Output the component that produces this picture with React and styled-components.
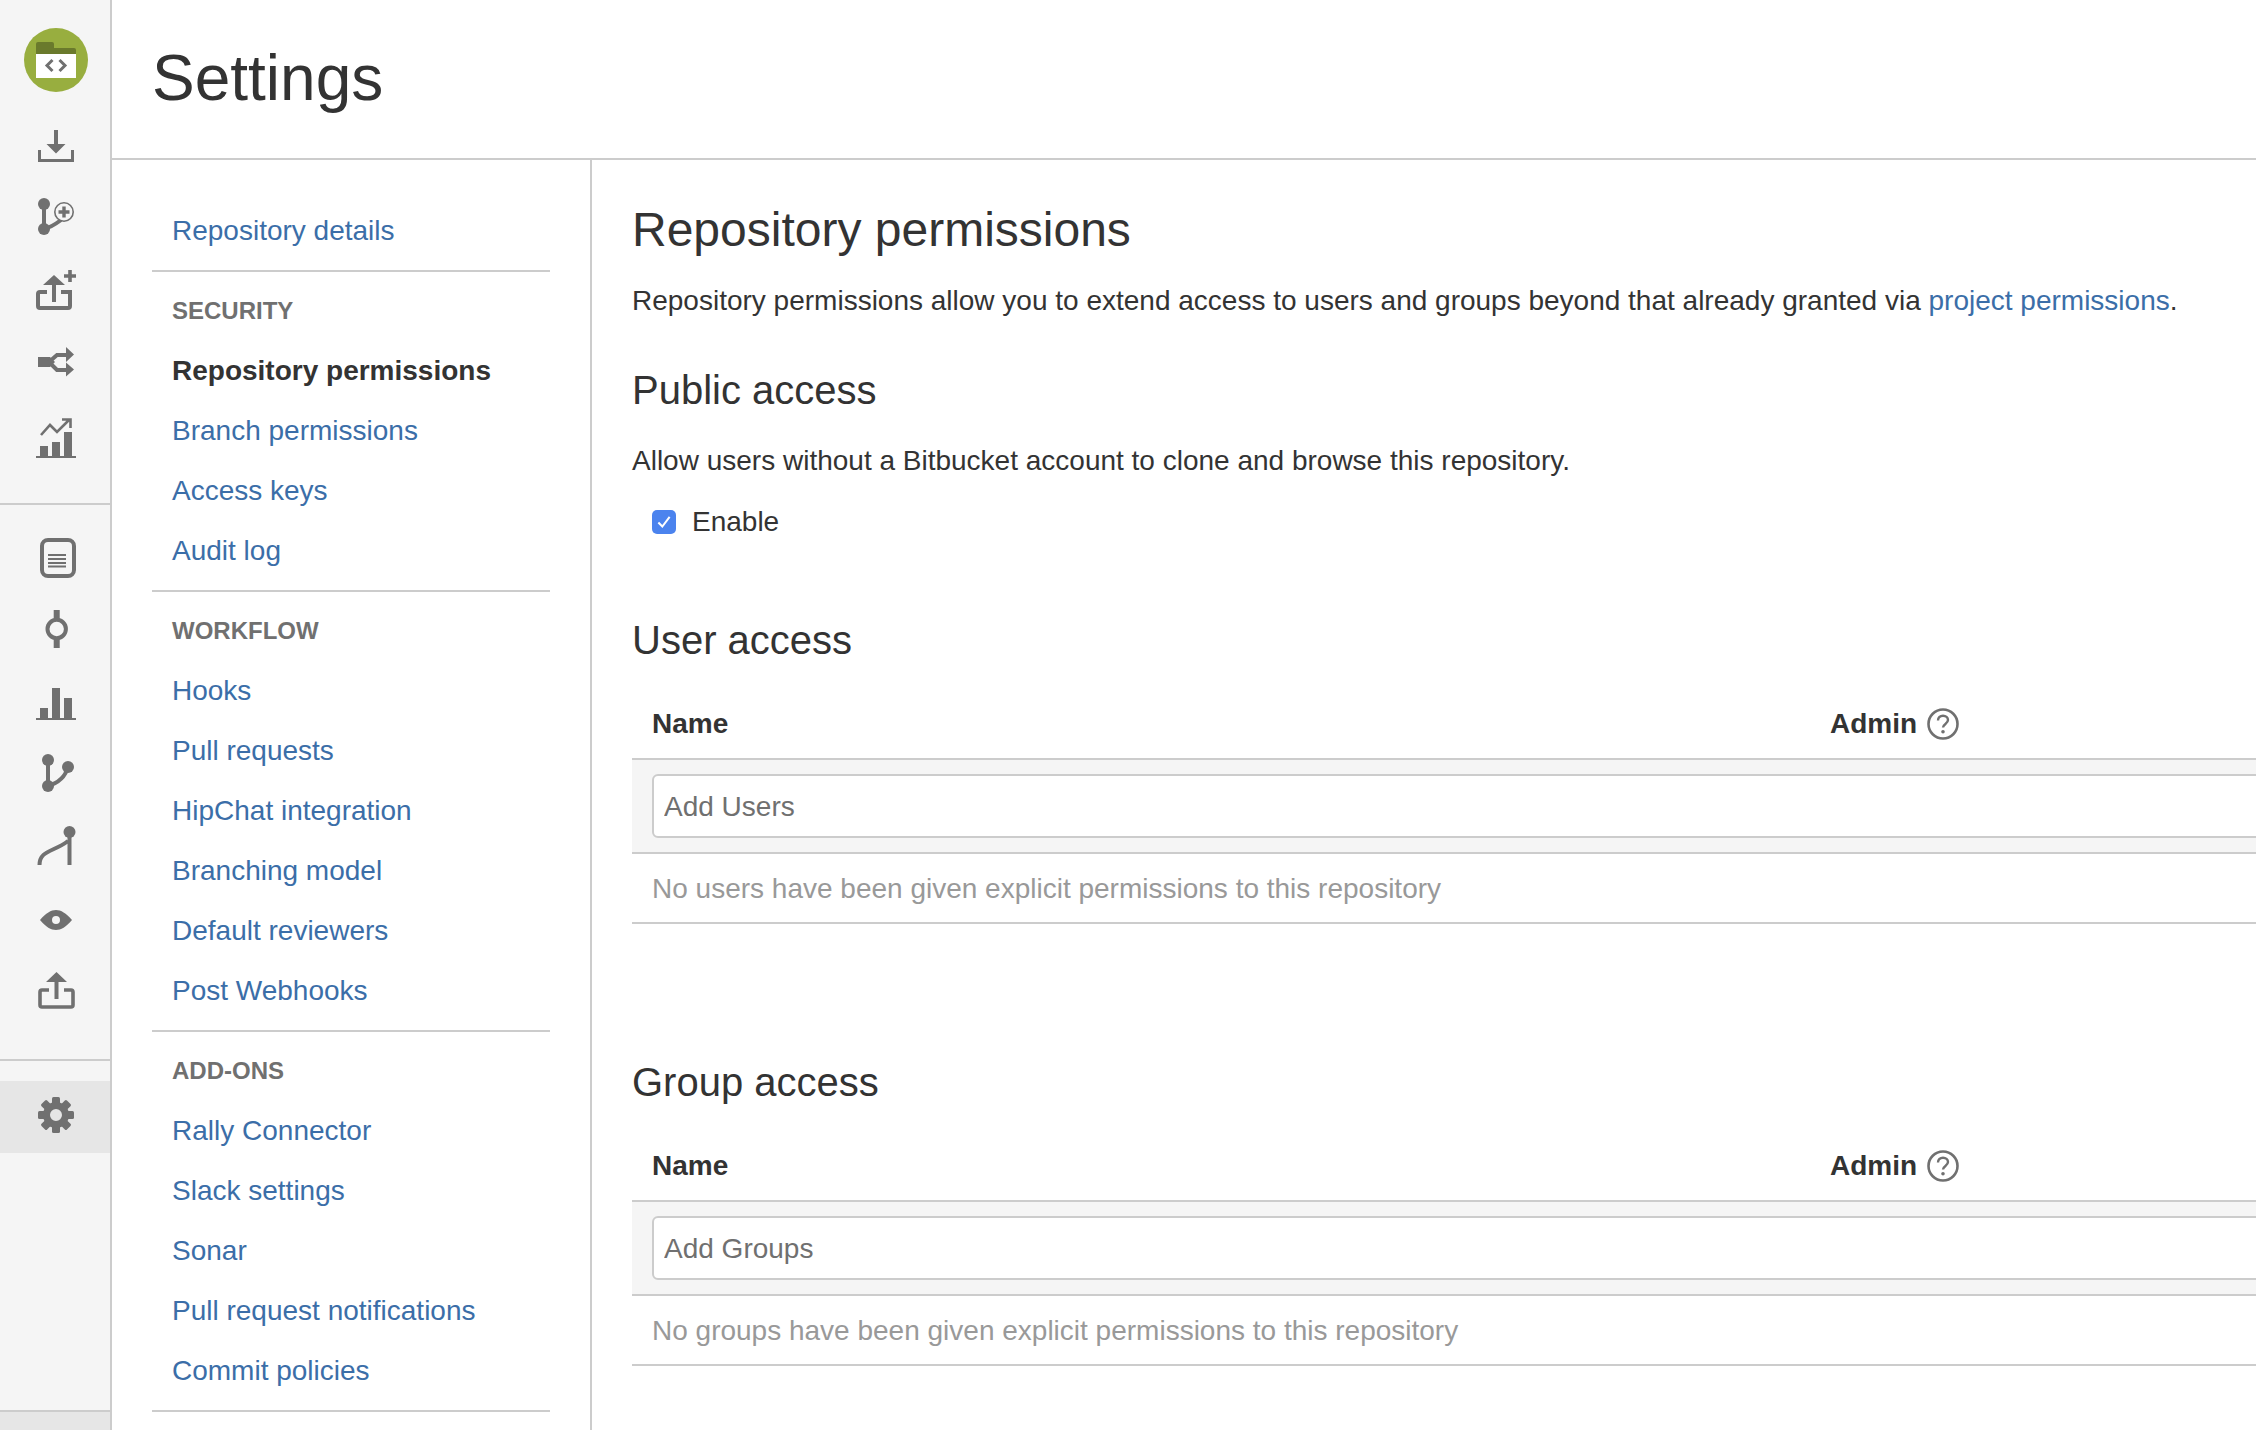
import styled, { createGlobalStyle } from "styled-components";

const GlobalStyle = createGlobalStyle`
  html, body {
    margin: 0;
    padding: 0;
    background: #fff;
    overflow: hidden;
  }
  * {
    box-sizing: border-box;
  }
`;

const Page = styled.div`
  display: flex;
  width: 2256px;
  height: 1430px;
  overflow: hidden;
  font-family: "Liberation Sans", Arial, sans-serif;
  font-size: 28px;
  color: #333;
`;

const Sidebar = styled.aside`
  display: flex;
  flex-direction: column;
  flex: 0 0 112px;
  background: #f5f5f5;
  border-right: 2px solid #ccc;
`;

const IconGroup = styled.div`
  display: flex;
  flex-direction: column;
  height: ${(p) => p.$height}px;
  padding-left: 36px;
  border-bottom: 2px solid #ccc;
`;

const LogoWrap = styled.div`
  margin: 28px 0 0 -12px;
  height: 64px;
`;

const IconSlot = styled.div`
  width: 40px;
  height: 40px;
  margin-top: ${(p) => p.$gap}px;
  color: #707070;

  svg {
    display: block;
  }
`;

const SettingsSlot = styled.div`
  display: flex;
  align-items: center;
  height: 72px;
  margin-top: 20px;
  padding: 0 0 4px 38px;
  background: #e6e6e6;
  color: #707070;
`;

const SidebarFill = styled.div`
  flex: 1;
  border-bottom: 2px solid #ccc;
`;

const SidebarFoot = styled.div`
  height: 18px;
  background: #e6e6e6;
`;

const Column = styled.div`
  display: flex;
  flex-direction: column;
  flex: 1;
  min-width: 0;
`;

const Header = styled.header`
  height: 160px;
  padding: 40px 0 0 40px;
  border-bottom: 2px solid #ccc;
`;

const PageTitle = styled.h1`
  margin: 0;
  font-size: 64px;
  font-weight: 400;
  line-height: 76px;
`;

const Body = styled.div`
  display: flex;
  flex: 1;
  min-height: 0;
`;

const Nav = styled.nav`
  flex: 0 0 480px;
  padding: 41px 40px 0;
  border-right: 2px solid #ccc;
`;

const NavGroup = styled.div`
  padding: ${(p) => (p.$first ? "0 0 9px" : "19px 0 9px")};
  border-bottom: 2px solid #ccc;
`;

const NavHeading = styled.div`
  margin-bottom: 10px;
  padding-left: 20px;
  font-size: 24px;
  font-weight: 700;
  line-height: 40px;
  color: #707070;
  text-transform: uppercase;
`;

const NavLink = styled.a`
  display: block;
  padding-left: 20px;
  line-height: 60px;
  color: ${(p) => (p.$active ? "#333" : "#3b6ea8")};
  font-weight: ${(p) => (p.$active ? 700 : 400)};
  text-decoration: none;
`;

const Main = styled.main`
  flex: 1;
  min-width: 0;
  padding: 41px 0 0 40px;
  overflow: hidden;
`;

const Title = styled.h2`
  margin: 0;
  font-size: 48px;
  font-weight: 400;
  line-height: 58px;
`;

const Text = styled.p`
  margin: ${(p) => p.$top}px 0 0;
  line-height: 40px;
  white-space: nowrap;
`;

const Link = styled.a`
  color: #3b6ea8;
  text-decoration: none;
`;

const Subtitle = styled.h3`
  margin: ${(p) => p.$top}px 0 0;
  font-size: 40px;
  font-weight: 400;
  line-height: 48px;
`;

const CheckRow = styled.label`
  display: flex;
  align-items: center;
  gap: 16px;
  margin-top: 21px;
  padding-left: 20px;
  line-height: 40px;
`;

const CheckBox = styled.span`
  display: flex;
  align-items: center;
  justify-content: center;
  width: 24px;
  height: 24px;
  border-radius: 5px;
  background: #4b83ee;
`;

const Table = styled.div`
  width: 1700px;
  margin-top: 26px;
`;

const TableHead = styled.div`
  display: grid;
  grid-template-columns: 1178px 1fr;
  align-items: center;
  height: 70px;
  padding-left: 20px;
  border-bottom: 2px solid #ccc;
  font-weight: 700;
`;

const AdminCell = styled.div`
  display: flex;
  align-items: center;
  gap: 10px;
`;

const InputRow = styled.div`
  padding: 14px 0 14px 20px;
  background: #f5f5f5;
  border-bottom: 2px solid #ccc;
`;

const TextInput = styled.input`
  display: block;
  width: 100%;
  height: 64px;
  padding: 2px 10px 0;
  border: 2px solid #ccc;
  border-radius: 6px;
  background: #fff;
  font: inherit;
  color: #333;

  &::placeholder {
    color: #707070;
    opacity: 1;
  }
`;

const EmptyRow = styled.div`
  display: flex;
  align-items: center;
  height: 70px;
  padding: 2px 0 0 20px;
  border-bottom: 2px solid #ccc;
  color: #999;
`;

function Logo() {
  return (
    <svg width="64" height="64" viewBox="0 0 64 64">
      <circle cx="32" cy="32" r="32" fill="#98ae3f" />
      <path d="M12 20v-4a2 2 0 0 1 2-2h14a2 2 0 0 1 2 2v4h20a2 2 0 0 1 2 2v4H12z" fill="#6a7a2c" />
      <rect x="12" y="26" width="40" height="24" fill="#fff" />
      <path d="M28.500 32l-5.500 5.500 5.500 5.500M35.500 32l5.500 5.500-5.500 5.500" fill="none" stroke="#707070" strokeWidth="3" />
    </svg>
  );
}

function Icon({ children }) {
  return (
    <svg width="40" height="40" viewBox="0 0 40 40" fill="currentColor" style={{ overflow: "visible" }}>
      {children}
    </svg>
  );
}

const DownloadIcon = () => (
  <Icon>
    <path d="M18 4h4v14h7.500L20 27.500 10.500 18H18z" />
    <path d="M2 24h3v9h30v-9h3v12H2z" />
  </Icon>
);

const CreatePrIcon = () => (
  <Icon>
    <circle cx="8" cy="8" r="6" />
    <circle cx="8" cy="33" r="6" />
    <path d="M8 8v25M8 33c8-2 13-6 17-9" fill="none" stroke="currentColor" strokeWidth="4" />
    <circle cx="28" cy="16" r="9.200" fill="#f5f5f5" stroke="currentColor" strokeWidth="1.600" />
    <path d="M28 10.500v11M22.500 16h11" fill="none" stroke="currentColor" strokeWidth="3.400" />
  </Icon>
);

const ForkIcon = () => (
  <Icon>
    <path d="M11 22H4a2 2 0 0 0-2 2v12a2 2 0 0 0 2 2h28a2 2 0 0 0 2-2V22h-9" fill="none" stroke="currentColor" strokeWidth="4" />
    <path d="M18 5l11 10h-9v17h-4V15H7z" />
    <path d="M34 0v12M28 6h12" fill="none" stroke="currentColor" strokeWidth="3.600" />
  </Icon>
);

const CompareIcon = () => (
  <Icon>
    <path d="M2 15h12l5 5-5 5H2z" />
    <path d="M13 20l8-7h10M13 20l8 8h10" fill="none" stroke="currentColor" strokeWidth="4" />
    <path d="M30 5l8 7.500-8 7.500zM30 20.500l8 7-8 7z" />
  </Icon>
);

const ChartIcon = () => (
  <Icon>
    <path d="M0 38h40v2H0zM4 28h8v10H4zM16 24h8v14h-8zM28 14h8v24h-8z" />
    <path d="M5 17l9-10 7 7 12-12M26 1.500h8.500v8.500" fill="none" stroke="currentColor" strokeWidth="2.600" />
  </Icon>
);

const SourceIcon = () => (
  <Icon>
    <rect x="6" y="2" width="32" height="36" rx="6" fill="none" stroke="currentColor" strokeWidth="4" />
    <path d="M12 17h18M12 21h18M12 25h18M12 28.500h18" fill="none" stroke="currentColor" strokeWidth="1.800" />
  </Icon>
);

const CommitIcon = () => (
  <Icon>
    <circle cx="20.700" cy="20" r="9.200" fill="none" stroke="currentColor" strokeWidth="4" />
    <path d="M20.700 1v10M20.700 29v10" fill="none" stroke="currentColor" strokeWidth="6" />
  </Icon>
);

const BarsIcon = () => (
  <Icon>
    <path d="M0 34h40v2H0zM4 24h8v10H4zM16 4h8v30h-8zM28 14h8v20h-8z" />
  </Icon>
);

const BranchIcon = () => (
  <Icon>
    <circle cx="12" cy="7" r="6" />
    <circle cx="12" cy="33" r="6" />
    <circle cx="32" cy="14" r="6" />
    <path d="M12 7v26M12 33c10-3 17-8 20-19" fill="none" stroke="currentColor" strokeWidth="4" />
  </Icon>
);

const PullRequestIcon = () => (
  <Icon>
    <circle cx="33.500" cy="6" r="6" />
    <path d="M33.500 6v33M3.500 39C3.500 24 18 26 32 15" fill="none" stroke="currentColor" strokeWidth="4" />
  </Icon>
);

const EyeIcon = () => (
  <Icon>
    <path
      fillRule="evenodd"
      d="M4 20c6-7 11-10 16-10s10 3 16 10c-6 7-11 10-16 10S10 27 4 20zm16-4a4 4 0 1 0 0 8 4 4 0 0 0 0-8z"
    />
  </Icon>
);

const ShareIcon = () => (
  <Icon>
    <path d="M13 20H6a2 2 0 0 0-2 2v13a2 2 0 0 0 2 2h29a2 2 0 0 0 2-2V22a2 2 0 0 0-2-2h-7" fill="none" stroke="currentColor" strokeWidth="3.600" />
    <path d="M20.500 2l10.500 10h-8.500v17h-4V12H10z" />
  </Icon>
);

const GearIcon = () => (
  <svg width="36" height="36" viewBox="0 0 36 36" fill="currentColor">
    {[0, 45, 90, 135, 180, 225, 270, 315].map((angle) => (
      <rect key={angle} x="14" y="0" width="8" height="10" rx="1.500" transform={`rotate(${angle} 18 18)`} />
    ))}
    <path
      fillRule="evenodd"
      d="M18 5a13 13 0 1 1 0 26 13 13 0 0 1 0-26zm0 7a6 6 0 1 0 0 12 6 6 0 0 0 0-12z"
    />
  </svg>
);

const HelpIcon = () => (
  <svg width="32" height="32" viewBox="0 0 32 32">
    <circle cx="16" cy="16" r="14.500" fill="none" stroke="#707070" strokeWidth="2.600" />
    <path d="M11 12.500c0-3 2.200-4.800 5-4.800s5 1.800 5 4.400c0 3.800-5 3.800-5 7.400" fill="none" stroke="#707070" strokeWidth="2.400" />
    <circle cx="16" cy="23.800" r="1.800" fill="#707070" />
  </svg>
);

const topIcons = [
  [DownloadIcon, 34],
  [CreatePrIcon, 30],
  [ForkIcon, 34],
  [CompareIcon, 32],
  [ChartIcon, 36],
];

const midIcons = [
  [SourceIcon, 33],
  [CommitIcon, 31],
  [BarsIcon, 35],
  [BranchIcon, 29],
  [PullRequestIcon, 33],
  [EyeIcon, 34],
  [ShareIcon, 30],
];

const navGroups = [
  {
    title: "Security",
    links: ["Repository permissions", "Branch permissions", "Access keys", "Audit log"],
  },
  {
    title: "Workflow",
    links: ["Hooks", "Pull requests", "HipChat integration", "Branching model", "Default reviewers", "Post Webhooks"],
  },
  {
    title: "Add-ons",
    links: ["Rally Connector", "Slack settings", "Sonar", "Pull request notifications", "Commit policies"],
  },
];

function AccessTable({ placeholder, empty }) {
  return (
    <Table>
      <TableHead>
        <div>Name</div>
        <AdminCell>
          Admin
          <HelpIcon />
        </AdminCell>
      </TableHead>
      <InputRow>
        <TextInput placeholder={placeholder} readOnly />
      </InputRow>
      <EmptyRow>{empty}</EmptyRow>
    </Table>
  );
}

export default function App() {
  return (
    <Page>
      <GlobalStyle />
      <Sidebar>
        <IconGroup $height={505}>
          <LogoWrap>
            <Logo />
          </LogoWrap>
          {topIcons.map(([Glyph, gap], i) => (
            <IconSlot key={i} $gap={gap}>
              <Glyph />
            </IconSlot>
          ))}
        </IconGroup>
        <IconGroup $height={556}>
          {midIcons.map(([Glyph, gap], i) => (
            <IconSlot key={i} $gap={gap}>
              <Glyph />
            </IconSlot>
          ))}
        </IconGroup>
        <SettingsSlot>
          <GearIcon />
        </SettingsSlot>
        <SidebarFill />
        <SidebarFoot />
      </Sidebar>
      <Column>
        <Header>
          <PageTitle>Settings</PageTitle>
        </Header>
        <Body>
          <Nav>
            <NavGroup $first>
              <NavLink href="#">Repository details</NavLink>
            </NavGroup>
            {navGroups.map((group) => (
              <NavGroup key={group.title}>
                <NavHeading>{group.title}</NavHeading>
                {group.links.map((link) => (
                  <NavLink key={link} href="#" $active={link === "Repository permissions"}>
                    {link}
                  </NavLink>
                ))}
              </NavGroup>
            ))}
          </Nav>
          <Main>
            <Title>Repository permissions</Title>
            <Text $top={22}>
              Repository permissions allow you to extend access to users and groups beyond that already granted via{" "}
              <Link href="#">project permissions</Link>.
            </Text>
            <Subtitle $top={45}>Public access</Subtitle>
            <Text $top={27}>Allow users without a Bitbucket account to clone and browse this repository.</Text>
            <CheckRow>
              <CheckBox>
                <svg width="18" height="18" viewBox="0 0 16 16">
                  <path d="M3 8.500l3.500 3.500L13 3.500" fill="none" stroke="#fff" strokeWidth="1.800" />
                </svg>
              </CheckBox>
              Enable
            </CheckRow>
            <Subtitle $top={74}>User access</Subtitle>
            <AccessTable
              placeholder="Add Users"
              empty="No users have been given explicit permissions to this repository"
            />
            <Subtitle $top={134}>Group access</Subtitle>
            <AccessTable
              placeholder="Add Groups"
              empty="No groups have been given explicit permissions to this repository"
            />
          </Main>
        </Body>
      </Column>
    </Page>
  );
}
